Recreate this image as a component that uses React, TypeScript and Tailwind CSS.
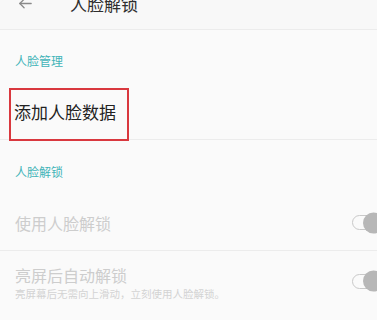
import React from "react";

const font = { fontFamily: '"Noto Sans CJK SC", "Noto Sans", sans-serif' };

function Toggle() {
  return (
    <div className="relative shrink-0 -mr-[9px] w-[34px] h-[15px] rounded-full border-[1.5px] border-[#c9c9c9] bg-[#fafafa]">
      <div className="absolute left-[10px] top-1/2 -translate-y-1/2 w-[21px] h-[21px] rounded-full bg-[#b7b7b7]" />
    </div>
  );
}

export default function App() {
  return (
    <div
      className="w-[377px] h-[320px] overflow-hidden bg-[#fafafa] text-[#333]"
      style={font}
    >
      {/* header */}
      <div className="h-[30px] flex items-start bg-[#f8f8f8] border-b border-[#ececec]">
        <div className="ml-[17px] -mt-[5px] h-[17px] flex items-center">
          <svg width="17" height="17" viewBox="0 0 24 24" fill="none" stroke="#8a8a8a" strokeWidth="1.8" strokeLinecap="round" strokeLinejoin="round">
            <path d="M20 12H4" />
            <path d="M10 6l-6 6 6 6" />
          </svg>
        </div>
        <div className="ml-[36px] -mt-[5px] text-[17px] leading-[17px] text-[#2e2e2e]">人脸解锁</div>
      </div>

      {/* section 1 */}
      <div className="pt-[25px] px-[15px] text-[12px] leading-[12px] text-[#42b4b8]">人脸管理</div>
      <div className="relative mt-[16px] h-[57px] flex items-center pl-[14px] border-b border-[#ececec]">
        <span className="text-[17px] leading-[17px] text-[#222]">添加人脸数据</span>
        <div className="absolute left-[9px] top-[5px] w-[120px] h-[53px] border-2 border-[#d9383e]" />
      </div>

      {/* section 2 */}
      <div className="pt-[26px] px-[15px] text-[12px] leading-[12px] text-[#42b4b8]">人脸解锁</div>
      <div className="mt-[17px] h-[56px] flex items-center justify-between pl-[15px] border-b border-[#ececec]">
        <span className="text-[16px] leading-[16px] text-[#cdcdcd]">使用人脸解锁</span>
        <Toggle />
      </div>
      <div className="h-[60px] flex items-center justify-between pl-[15px]">
        <div className="flex flex-col pt-[3px]">
          <span className="text-[16px] leading-[16px] text-[#cdcdcd]">亮屏后自动解锁</span>
          <span className="mt-[5px] text-[10.5px] leading-[11px] text-[#d3d3d3] whitespace-nowrap">亮屏幕后无需向上滑动，立刻使用人脸解锁。</span>
        </div>
        <Toggle />
      </div>
    </div>
  );
}
